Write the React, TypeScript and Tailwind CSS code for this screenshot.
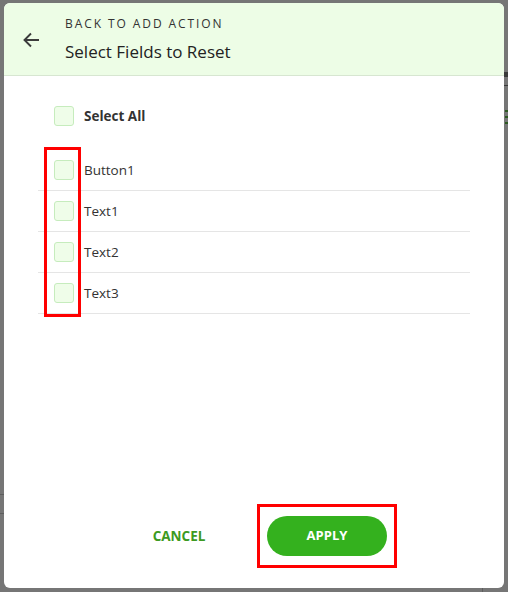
import React from "react";

const rows = ["Button1", "Text1", "Text2", "Text3"];

function Box() {
  return <div className="w-[20px] h-[20px] rounded-[3px] border border-[#c6ecbd] bg-[#effde9] shrink-0" />;
}

export default function App() {
  return (
    <div
      className="relative w-[508px] h-[592px] bg-[#767676] overflow-hidden pt-[3px] pl-[4px]"
      style={{ fontFamily: '"Open Sans", "Noto Sans", sans-serif' }}
    >
      {/* dimmed page bits peeking out */}
      <div className="absolute right-0 top-[72px] w-[4px] h-[5px] bg-[#3a3a3a]" />
      <div className="absolute right-0 top-[85px] w-[4px] h-[1px] bg-[#3a3a3a]" />
      <div className="absolute right-0 top-[110px] w-[3px] h-[2px] bg-[#2e5a22]" />
      <div className="absolute right-0 top-[116px] w-[3px] h-[2px] bg-[#2e5a22]" />
      <div className="absolute right-0 top-[122px] w-[3px] h-[2px] bg-[#2e5a22]" />
      <div className="absolute left-0 top-[494px] w-[4px] h-[1px] bg-[#5e5e5e]" />
      <div className="absolute left-0 top-[513px] w-[4px] h-[1px] bg-[#5e5e5e]" />
      <div className="absolute left-[482px] top-[588px] w-[1px] h-[4px] bg-[#5e5e5e]" />

      <div className="w-[500px] h-[585px] bg-white rounded-[6px] overflow-hidden flex flex-col">
        <div className="h-[73px] bg-[#edfde6] border-b border-[#d7e6d1] flex items-center shrink-0">
          <div className="w-[61px] pl-[18px] pt-[2px]">
            <svg width="18" height="18" viewBox="0 0 18 18" fill="none" stroke="#3c3c3c" strokeWidth="1.9">
              <path d="M2.5 9H17" />
              <path d="M9 2.5L2.5 9L9 15.5" strokeLinejoin="miter" />
            </svg>
          </div>
          <div className="flex flex-col pt-[2px]">
            <div className="text-[12px] leading-[16px] tracking-[0.16em] text-[#333]">BACK TO ADD ACTION</div>
            <div className="text-[17px] leading-[24px] text-[#222] mt-[8px]">Select Fields to Reset</div>
          </div>
        </div>

        <div className="flex flex-col pl-[34px] pr-[34px] pt-[20px]">
          <div className="h-[40px] flex items-center gap-[10px] pl-[16px]">
            <Box />
            <span className="text-[13.5px] font-bold text-[#333]">Select All</span>
          </div>
          <div className="mt-[14px] flex flex-col">
            {rows.map((r) => (
              <div key={r} className="h-[41px] border-b border-[#e5e5e5] flex items-center gap-[10px] pl-[16px]">
                <Box />
                <span className="text-[13.5px] text-[#333]">{r}</span>
              </div>
            ))}
          </div>
        </div>

        <div className="mt-auto pb-[32px] flex items-center justify-center">
          <button className="ml-[8px] text-[13.5px] font-bold text-[#3d9a22] w-[100px] h-[40px]">CANCEL</button>
          <div className="relative ml-[38px]">
            <button className="w-[120px] h-[40px] rounded-full bg-[#34b11e] text-white text-[13px] font-bold">APPLY</button>
            <div className="absolute left-[-10px] top-[-12px] w-[140px] h-[64px] border-[3px] border-[#ff0000]" />
          </div>
        </div>
      </div>

      <div className="absolute left-[44px] top-[147px] w-[37px] h-[170px] border-[3px] border-[#ff0000]" />
    </div>
  );
}
